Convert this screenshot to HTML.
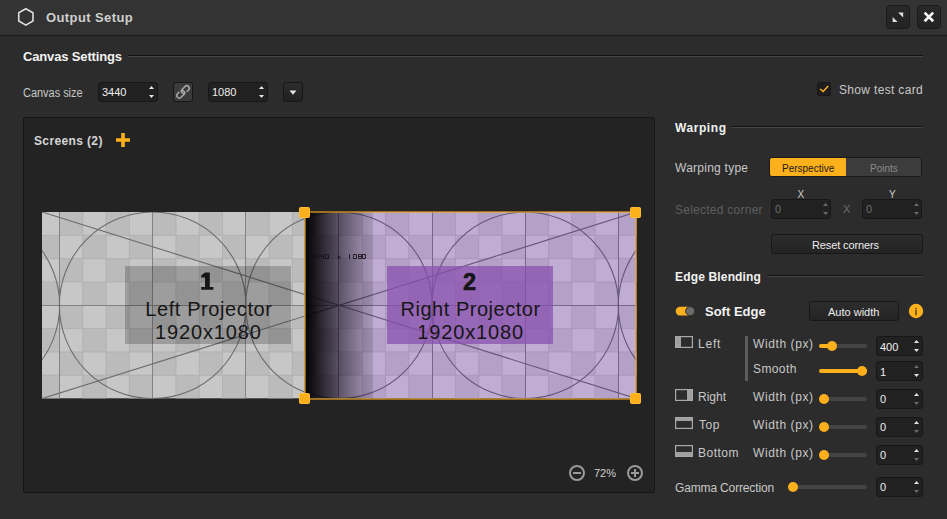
<!DOCTYPE html>
<html><head><meta charset="utf-8">
<style>
*{margin:0;padding:0;box-sizing:border-box}
html,body{width:947px;height:519px;overflow:hidden;background:#2c2c2c;font-family:"Liberation Sans",sans-serif;color:#c8c8c8}
.a{position:absolute}
.t{position:absolute;white-space:nowrap;line-height:1}
.b{font-weight:bold}
#title{left:0;top:0;width:947px;height:36px;background:#333333;border-bottom:1px solid #1c1c1c}
.wbtn{position:absolute;top:5px;width:24px;height:24px;border-radius:4px;background:linear-gradient(#292929,#232323);border:1px solid #1a1a1a}
.hline{position:absolute;height:2px;border-top:1px solid #121212;background:#474747}
.inp{position:absolute;height:20px;background:#212121;border:1px solid #171717;border-radius:3px}
.btn{position:absolute;background:#272727;border:1px solid #171717;border-radius:3px}
.lab{font-size:12px;color:#c8c8c8}
.val{font-size:11px;color:#f0f0f0}
.track{position:absolute;height:4px;border-radius:2px;background:#444}
.knob{position:absolute;width:10px;height:10px;border-radius:5px;background:#fcb01c}
.fill{position:absolute;height:4px;border-radius:2px;background:#fcb01c}
</style></head><body>
<div id="title" class="a"></div>
<svg class="a" style="left:16px;top:7px" width="20" height="21" viewBox="0 0 20 21">
<polygon points="9.85,1.7 16.95,5.8 16.95,14 9.85,18.1 2.75,14 2.75,5.8" fill="none" stroke="#dcdcdc" stroke-width="1.6"/>
</svg>
<div class="t b" style="left:46px;top:11px;font-size:13px;color:#cfcfcf;letter-spacing:0.4px">Output Setup</div>
<div class="wbtn" style="left:886px"></div>
<div class="wbtn" style="left:917px"></div>
<svg class="a" style="left:886px;top:5px" width="55" height="24" viewBox="0 0 55 24">
<polygon points="12.1,7.4 17.2,7.4 17.2,12.5" fill="#dedede"/>
<polygon points="6.6,12 6.6,17.1 11.7,17.1" fill="#dedede"/>
<path d="M38.6,7.6 L47.2,16.2 M47.2,7.6 L38.6,16.2" stroke="#f4f4f4" stroke-width="2.7" stroke-linecap="butt"/>
</svg>

<!-- Canvas settings -->
<div class="t b" style="left:23px;top:50px;font-size:13px;color:#f2f2f2;letter-spacing:-0.15px">Canvas Settings</div>
<div class="hline" style="left:128px;top:55px;width:795px"></div>
<div class="t lab" style="left:23px;top:87px;transform:scaleX(0.912);transform-origin:0 0">Canvas size</div>
<div class="inp" style="left:98px;top:82px;width:60px"></div>
<div class="t val" style="left:102px;top:87px">3440</div>
<div class="btn" style="left:173px;top:82px;width:20px;height:20px;background:#3b3b3b;border-color:#161616"></div>
<svg class="a" style="left:173px;top:82px" width="20" height="20" viewBox="0 0 20 20">
<g fill="none" stroke="#a8a8a8" stroke-width="1.5">
<rect x="3.2" y="9.7" width="8.8" height="5" rx="2.5" transform="rotate(-45 7.6 12.2)"/>
<rect x="8" y="5.1" width="8.8" height="5" rx="2.5" transform="rotate(-45 12.4 7.6)"/>
</g>
<g fill="#3b3b3b"><circle cx="6.6" cy="8.9" r="1.1"/><circle cx="13.4" cy="10.9" r="1.1"/></g>
</svg>
<div class="inp" style="left:208px;top:82px;width:60px"></div>
<div class="t val" style="left:212px;top:87px">1080</div>
<div class="btn" style="left:283px;top:82px;width:20px;height:20px;background:linear-gradient(#2c2c2c,#202020)"></div>
<svg class="a" style="left:0;top:0" width="947" height="519" viewBox="0 0 947 519">
<g fill="#e4e4e4">
<polygon points="149,89 154,89 151.5,86"/><polygon points="149,95 154,95 151.5,98"/>
<polygon points="259,89 264,89 261.5,86"/><polygon points="259,95 264,95 261.5,98"/>
<polygon points="289.5,90.5 296.5,90.5 293,94.8"/>
</g>
</svg>
<div class="a" style="left:817px;top:82px;width:14px;height:14px;background:#1e1e1e;border:1px solid #181818;border-radius:2px"></div>
<svg class="a" style="left:817px;top:82px" width="14" height="14" viewBox="0 0 14 14">
<path d="M3.1,7 L6.2,9.5 L11.2,4" fill="none" stroke="#fcb01c" stroke-width="1.45"/>
</svg>
<div class="t lab" style="left:839px;top:83.5px;letter-spacing:0.33px">Show test card</div>

<!-- canvas panel -->
<div class="a" style="left:23px;top:117px;width:632px;height:376px;background:#232323;border:1px solid #151515;border-radius:2px"></div>
<div class="t b" style="left:34px;top:135px;font-size:12px;color:#d6d6d6;letter-spacing:0.37px">Screens (2)</div>
<svg class="a" style="left:116px;top:133px" width="14" height="14" viewBox="0 0 14 14">
<path d="M7,0 V14 M0,7 H14" stroke="#fcb01c" stroke-width="3.6"/>
</svg>

<svg class="a" style="left:0;top:0" width="947" height="519" viewBox="0 0 947 519">
<defs>
<clipPath id="cl"><rect x="42" y="212" width="262.8" height="186.6"/></clipPath>
<clipPath id="cr"><rect x="304.8" y="212" width="331.6" height="186.6"/></clipPath>
<linearGradient id="blend" x1="0" x2="1" y1="0" y2="0">
<stop offset="0" stop-color="#000" stop-opacity="1"/>
<stop offset="0.25" stop-color="#000" stop-opacity="0.76"/>
<stop offset="0.5" stop-color="#000" stop-opacity="0.52"/>
<stop offset="0.84" stop-color="#000" stop-opacity="0.22"/>
<stop offset="1" stop-color="#000" stop-opacity="0.12"/>
</linearGradient>
</defs>
<g clip-path="url(#cl)">
<rect x="42.0" y="212.0" width="594.4" height="186.60000000000002" fill="#c7c7c7"/>
<rect x="12.92" y="212.00" width="23.288" height="23.325" fill="#bbbbbb"/>
<rect x="12.92" y="258.65" width="23.288" height="23.325" fill="#bbbbbb"/>
<rect x="12.92" y="305.30" width="23.288" height="23.325" fill="#bbbbbb"/>
<rect x="12.92" y="351.95" width="23.288" height="23.325" fill="#bbbbbb"/>
<rect x="36.21" y="235.32" width="23.288" height="23.325" fill="#bbbbbb"/>
<rect x="36.21" y="281.98" width="23.288" height="23.325" fill="#bbbbbb"/>
<rect x="36.21" y="328.62" width="23.288" height="23.325" fill="#bbbbbb"/>
<rect x="36.21" y="375.28" width="23.288" height="23.325" fill="#bbbbbb"/>
<rect x="59.50" y="212.00" width="23.288" height="23.325" fill="#bbbbbb"/>
<rect x="59.50" y="258.65" width="23.288" height="23.325" fill="#bbbbbb"/>
<rect x="59.50" y="305.30" width="23.288" height="23.325" fill="#bbbbbb"/>
<rect x="59.50" y="351.95" width="23.288" height="23.325" fill="#bbbbbb"/>
<rect x="82.79" y="235.32" width="23.288" height="23.325" fill="#bbbbbb"/>
<rect x="82.79" y="281.98" width="23.288" height="23.325" fill="#bbbbbb"/>
<rect x="82.79" y="328.62" width="23.288" height="23.325" fill="#bbbbbb"/>
<rect x="82.79" y="375.28" width="23.288" height="23.325" fill="#bbbbbb"/>
<rect x="106.07" y="212.00" width="23.288" height="23.325" fill="#bbbbbb"/>
<rect x="106.07" y="258.65" width="23.288" height="23.325" fill="#bbbbbb"/>
<rect x="106.07" y="305.30" width="23.288" height="23.325" fill="#bbbbbb"/>
<rect x="106.07" y="351.95" width="23.288" height="23.325" fill="#bbbbbb"/>
<rect x="129.36" y="235.32" width="23.288" height="23.325" fill="#bbbbbb"/>
<rect x="129.36" y="281.98" width="23.288" height="23.325" fill="#bbbbbb"/>
<rect x="129.36" y="328.62" width="23.288" height="23.325" fill="#bbbbbb"/>
<rect x="129.36" y="375.28" width="23.288" height="23.325" fill="#bbbbbb"/>
<rect x="152.65" y="212.00" width="23.288" height="23.325" fill="#bbbbbb"/>
<rect x="152.65" y="258.65" width="23.288" height="23.325" fill="#bbbbbb"/>
<rect x="152.65" y="305.30" width="23.288" height="23.325" fill="#bbbbbb"/>
<rect x="152.65" y="351.95" width="23.288" height="23.325" fill="#bbbbbb"/>
<rect x="175.94" y="235.32" width="23.288" height="23.325" fill="#bbbbbb"/>
<rect x="175.94" y="281.98" width="23.288" height="23.325" fill="#bbbbbb"/>
<rect x="175.94" y="328.62" width="23.288" height="23.325" fill="#bbbbbb"/>
<rect x="175.94" y="375.28" width="23.288" height="23.325" fill="#bbbbbb"/>
<rect x="199.22" y="212.00" width="23.288" height="23.325" fill="#bbbbbb"/>
<rect x="199.22" y="258.65" width="23.288" height="23.325" fill="#bbbbbb"/>
<rect x="199.22" y="305.30" width="23.288" height="23.325" fill="#bbbbbb"/>
<rect x="199.22" y="351.95" width="23.288" height="23.325" fill="#bbbbbb"/>
<rect x="222.51" y="235.32" width="23.288" height="23.325" fill="#bbbbbb"/>
<rect x="222.51" y="281.98" width="23.288" height="23.325" fill="#bbbbbb"/>
<rect x="222.51" y="328.62" width="23.288" height="23.325" fill="#bbbbbb"/>
<rect x="222.51" y="375.28" width="23.288" height="23.325" fill="#bbbbbb"/>
<rect x="245.80" y="212.00" width="23.288" height="23.325" fill="#bbbbbb"/>
<rect x="245.80" y="258.65" width="23.288" height="23.325" fill="#bbbbbb"/>
<rect x="245.80" y="305.30" width="23.288" height="23.325" fill="#bbbbbb"/>
<rect x="245.80" y="351.95" width="23.288" height="23.325" fill="#bbbbbb"/>
<rect x="269.09" y="235.32" width="23.288" height="23.325" fill="#bbbbbb"/>
<rect x="269.09" y="281.98" width="23.288" height="23.325" fill="#bbbbbb"/>
<rect x="269.09" y="328.62" width="23.288" height="23.325" fill="#bbbbbb"/>
<rect x="269.09" y="375.28" width="23.288" height="23.325" fill="#bbbbbb"/>
<rect x="292.38" y="212.00" width="23.288" height="23.325" fill="#bbbbbb"/>
<rect x="292.38" y="258.65" width="23.288" height="23.325" fill="#bbbbbb"/>
<rect x="292.38" y="305.30" width="23.288" height="23.325" fill="#bbbbbb"/>
<rect x="292.38" y="351.95" width="23.288" height="23.325" fill="#bbbbbb"/>
<rect x="315.66" y="235.32" width="23.288" height="23.325" fill="#bbbbbb"/>
<rect x="315.66" y="281.98" width="23.288" height="23.325" fill="#bbbbbb"/>
<rect x="315.66" y="328.62" width="23.288" height="23.325" fill="#bbbbbb"/>
<rect x="315.66" y="375.28" width="23.288" height="23.325" fill="#bbbbbb"/>
<rect x="338.95" y="212.00" width="23.288" height="23.325" fill="#bbbbbb"/>
<rect x="338.95" y="258.65" width="23.288" height="23.325" fill="#bbbbbb"/>
<rect x="338.95" y="305.30" width="23.288" height="23.325" fill="#bbbbbb"/>
<rect x="338.95" y="351.95" width="23.288" height="23.325" fill="#bbbbbb"/>
<rect x="362.24" y="235.32" width="23.288" height="23.325" fill="#bbbbbb"/>
<rect x="362.24" y="281.98" width="23.288" height="23.325" fill="#bbbbbb"/>
<rect x="362.24" y="328.62" width="23.288" height="23.325" fill="#bbbbbb"/>
<rect x="362.24" y="375.28" width="23.288" height="23.325" fill="#bbbbbb"/>
<rect x="385.52" y="212.00" width="23.288" height="23.325" fill="#bbbbbb"/>
<rect x="385.52" y="258.65" width="23.288" height="23.325" fill="#bbbbbb"/>
<rect x="385.52" y="305.30" width="23.288" height="23.325" fill="#bbbbbb"/>
<rect x="385.52" y="351.95" width="23.288" height="23.325" fill="#bbbbbb"/>
<rect x="408.81" y="235.32" width="23.288" height="23.325" fill="#bbbbbb"/>
<rect x="408.81" y="281.98" width="23.288" height="23.325" fill="#bbbbbb"/>
<rect x="408.81" y="328.62" width="23.288" height="23.325" fill="#bbbbbb"/>
<rect x="408.81" y="375.28" width="23.288" height="23.325" fill="#bbbbbb"/>
<rect x="432.10" y="212.00" width="23.288" height="23.325" fill="#bbbbbb"/>
<rect x="432.10" y="258.65" width="23.288" height="23.325" fill="#bbbbbb"/>
<rect x="432.10" y="305.30" width="23.288" height="23.325" fill="#bbbbbb"/>
<rect x="432.10" y="351.95" width="23.288" height="23.325" fill="#bbbbbb"/>
<rect x="455.39" y="235.32" width="23.288" height="23.325" fill="#bbbbbb"/>
<rect x="455.39" y="281.98" width="23.288" height="23.325" fill="#bbbbbb"/>
<rect x="455.39" y="328.62" width="23.288" height="23.325" fill="#bbbbbb"/>
<rect x="455.39" y="375.28" width="23.288" height="23.325" fill="#bbbbbb"/>
<rect x="478.68" y="212.00" width="23.288" height="23.325" fill="#bbbbbb"/>
<rect x="478.68" y="258.65" width="23.288" height="23.325" fill="#bbbbbb"/>
<rect x="478.68" y="305.30" width="23.288" height="23.325" fill="#bbbbbb"/>
<rect x="478.68" y="351.95" width="23.288" height="23.325" fill="#bbbbbb"/>
<rect x="501.96" y="235.32" width="23.288" height="23.325" fill="#bbbbbb"/>
<rect x="501.96" y="281.98" width="23.288" height="23.325" fill="#bbbbbb"/>
<rect x="501.96" y="328.62" width="23.288" height="23.325" fill="#bbbbbb"/>
<rect x="501.96" y="375.28" width="23.288" height="23.325" fill="#bbbbbb"/>
<rect x="525.25" y="212.00" width="23.288" height="23.325" fill="#bbbbbb"/>
<rect x="525.25" y="258.65" width="23.288" height="23.325" fill="#bbbbbb"/>
<rect x="525.25" y="305.30" width="23.288" height="23.325" fill="#bbbbbb"/>
<rect x="525.25" y="351.95" width="23.288" height="23.325" fill="#bbbbbb"/>
<rect x="548.54" y="235.32" width="23.288" height="23.325" fill="#bbbbbb"/>
<rect x="548.54" y="281.98" width="23.288" height="23.325" fill="#bbbbbb"/>
<rect x="548.54" y="328.62" width="23.288" height="23.325" fill="#bbbbbb"/>
<rect x="548.54" y="375.28" width="23.288" height="23.325" fill="#bbbbbb"/>
<rect x="571.83" y="212.00" width="23.288" height="23.325" fill="#bbbbbb"/>
<rect x="571.83" y="258.65" width="23.288" height="23.325" fill="#bbbbbb"/>
<rect x="571.83" y="305.30" width="23.288" height="23.325" fill="#bbbbbb"/>
<rect x="571.83" y="351.95" width="23.288" height="23.325" fill="#bbbbbb"/>
<rect x="595.11" y="235.32" width="23.288" height="23.325" fill="#bbbbbb"/>
<rect x="595.11" y="281.98" width="23.288" height="23.325" fill="#bbbbbb"/>
<rect x="595.11" y="328.62" width="23.288" height="23.325" fill="#bbbbbb"/>
<rect x="595.11" y="375.28" width="23.288" height="23.325" fill="#bbbbbb"/>
<rect x="618.40" y="212.00" width="23.288" height="23.325" fill="#bbbbbb"/>
<rect x="618.40" y="258.65" width="23.288" height="23.325" fill="#bbbbbb"/>
<rect x="618.40" y="305.30" width="23.288" height="23.325" fill="#bbbbbb"/>
<rect x="618.40" y="351.95" width="23.288" height="23.325" fill="#bbbbbb"/>
<rect x="641.69" y="235.32" width="23.288" height="23.325" fill="#bbbbbb"/>
<rect x="641.69" y="281.98" width="23.288" height="23.325" fill="#bbbbbb"/>
<rect x="641.69" y="328.62" width="23.288" height="23.325" fill="#bbbbbb"/>
<rect x="641.69" y="375.28" width="23.288" height="23.325" fill="#bbbbbb"/>
<line x1="82.79" y1="212.0" x2="82.79" y2="398.6" stroke="#b2b2b2" stroke-width="1"/>
<line x1="106.07" y1="212.0" x2="106.07" y2="398.6" stroke="#b2b2b2" stroke-width="1"/>
<line x1="129.36" y1="212.0" x2="129.36" y2="398.6" stroke="#b2b2b2" stroke-width="1"/>
<line x1="175.94" y1="212.0" x2="175.94" y2="398.6" stroke="#b2b2b2" stroke-width="1"/>
<line x1="199.22" y1="212.0" x2="199.22" y2="398.6" stroke="#b2b2b2" stroke-width="1"/>
<line x1="222.51" y1="212.0" x2="222.51" y2="398.6" stroke="#b2b2b2" stroke-width="1"/>
<line x1="269.09" y1="212.0" x2="269.09" y2="398.6" stroke="#b2b2b2" stroke-width="1"/>
<line x1="292.38" y1="212.0" x2="292.38" y2="398.6" stroke="#b2b2b2" stroke-width="1"/>
<line x1="315.66" y1="212.0" x2="315.66" y2="398.6" stroke="#b2b2b2" stroke-width="1"/>
<line x1="362.24" y1="212.0" x2="362.24" y2="398.6" stroke="#b2b2b2" stroke-width="1"/>
<line x1="385.52" y1="212.0" x2="385.52" y2="398.6" stroke="#b2b2b2" stroke-width="1"/>
<line x1="408.81" y1="212.0" x2="408.81" y2="398.6" stroke="#b2b2b2" stroke-width="1"/>
<line x1="455.39" y1="212.0" x2="455.39" y2="398.6" stroke="#b2b2b2" stroke-width="1"/>
<line x1="478.68" y1="212.0" x2="478.68" y2="398.6" stroke="#b2b2b2" stroke-width="1"/>
<line x1="501.96" y1="212.0" x2="501.96" y2="398.6" stroke="#b2b2b2" stroke-width="1"/>
<line x1="548.54" y1="212.0" x2="548.54" y2="398.6" stroke="#b2b2b2" stroke-width="1"/>
<line x1="571.83" y1="212.0" x2="571.83" y2="398.6" stroke="#b2b2b2" stroke-width="1"/>
<line x1="595.11" y1="212.0" x2="595.11" y2="398.6" stroke="#b2b2b2" stroke-width="1"/>
<line x1="42.0" y1="235.32" x2="636.4" y2="235.32" stroke="#b2b2b2" stroke-width="1"/>
<line x1="42.0" y1="258.65" x2="636.4" y2="258.65" stroke="#b2b2b2" stroke-width="1"/>
<line x1="42.0" y1="281.98" x2="636.4" y2="281.98" stroke="#b2b2b2" stroke-width="1"/>
<line x1="42.0" y1="328.62" x2="636.4" y2="328.62" stroke="#b2b2b2" stroke-width="1"/>
<line x1="42.0" y1="351.95" x2="636.4" y2="351.95" stroke="#b2b2b2" stroke-width="1"/>
<line x1="42.0" y1="375.28" x2="636.4" y2="375.28" stroke="#b2b2b2" stroke-width="1"/>
<line x1="59.50" y1="212.0" x2="59.50" y2="398.6" stroke="#828282" stroke-width="1"/>
<line x1="152.50" y1="212.0" x2="152.50" y2="398.6" stroke="#828282" stroke-width="1"/>
<line x1="245.50" y1="212.0" x2="245.50" y2="398.6" stroke="#828282" stroke-width="1"/>
<line x1="338.50" y1="212.0" x2="338.50" y2="398.6" stroke="#828282" stroke-width="1"/>
<line x1="432.50" y1="212.0" x2="432.50" y2="398.6" stroke="#828282" stroke-width="1"/>
<line x1="525.50" y1="212.0" x2="525.50" y2="398.6" stroke="#828282" stroke-width="1"/>
<line x1="618.50" y1="212.0" x2="618.50" y2="398.6" stroke="#828282" stroke-width="1"/>
<line x1="42.0" y1="305.5" x2="636.4" y2="305.5" stroke="#828282" stroke-width="1"/>
<circle cx="-219.95" cy="305.3" r="93.30000000000001" fill="none" stroke="#6c6c6c" stroke-width="1.1"/>
<circle cx="-33.65" cy="305.3" r="93.30000000000001" fill="none" stroke="#6c6c6c" stroke-width="1.1"/>
<circle cx="152.65" cy="305.3" r="93.30000000000001" fill="none" stroke="#6c6c6c" stroke-width="1.1"/>
<circle cx="338.95" cy="305.3" r="93.30000000000001" fill="none" stroke="#6c6c6c" stroke-width="1.1"/>
<circle cx="525.25" cy="305.3" r="93.30000000000001" fill="none" stroke="#6c6c6c" stroke-width="1.1"/>
<circle cx="711.55" cy="305.3" r="93.30000000000001" fill="none" stroke="#6c6c6c" stroke-width="1.1"/>
<circle cx="897.85" cy="305.3" r="93.30000000000001" fill="none" stroke="#6c6c6c" stroke-width="1.1"/>
<line x1="42.0" y1="212.0" x2="636.4" y2="398.6" stroke="#6c6c6c" stroke-width="1.1"/>
<line x1="42.0" y1="398.6" x2="636.4" y2="212.0" stroke="#6c6c6c" stroke-width="1.1"/>
</g>
<g clip-path="url(#cr)">
<rect x="42.0" y="212.0" width="594.4" height="186.60000000000002" fill="#c0add3"/>
<rect x="12.92" y="212.00" width="23.288" height="23.325" fill="#b4a1c7"/>
<rect x="12.92" y="258.65" width="23.288" height="23.325" fill="#b4a1c7"/>
<rect x="12.92" y="305.30" width="23.288" height="23.325" fill="#b4a1c7"/>
<rect x="12.92" y="351.95" width="23.288" height="23.325" fill="#b4a1c7"/>
<rect x="36.21" y="235.32" width="23.288" height="23.325" fill="#b4a1c7"/>
<rect x="36.21" y="281.98" width="23.288" height="23.325" fill="#b4a1c7"/>
<rect x="36.21" y="328.62" width="23.288" height="23.325" fill="#b4a1c7"/>
<rect x="36.21" y="375.28" width="23.288" height="23.325" fill="#b4a1c7"/>
<rect x="59.50" y="212.00" width="23.288" height="23.325" fill="#b4a1c7"/>
<rect x="59.50" y="258.65" width="23.288" height="23.325" fill="#b4a1c7"/>
<rect x="59.50" y="305.30" width="23.288" height="23.325" fill="#b4a1c7"/>
<rect x="59.50" y="351.95" width="23.288" height="23.325" fill="#b4a1c7"/>
<rect x="82.79" y="235.32" width="23.288" height="23.325" fill="#b4a1c7"/>
<rect x="82.79" y="281.98" width="23.288" height="23.325" fill="#b4a1c7"/>
<rect x="82.79" y="328.62" width="23.288" height="23.325" fill="#b4a1c7"/>
<rect x="82.79" y="375.28" width="23.288" height="23.325" fill="#b4a1c7"/>
<rect x="106.07" y="212.00" width="23.288" height="23.325" fill="#b4a1c7"/>
<rect x="106.07" y="258.65" width="23.288" height="23.325" fill="#b4a1c7"/>
<rect x="106.07" y="305.30" width="23.288" height="23.325" fill="#b4a1c7"/>
<rect x="106.07" y="351.95" width="23.288" height="23.325" fill="#b4a1c7"/>
<rect x="129.36" y="235.32" width="23.288" height="23.325" fill="#b4a1c7"/>
<rect x="129.36" y="281.98" width="23.288" height="23.325" fill="#b4a1c7"/>
<rect x="129.36" y="328.62" width="23.288" height="23.325" fill="#b4a1c7"/>
<rect x="129.36" y="375.28" width="23.288" height="23.325" fill="#b4a1c7"/>
<rect x="152.65" y="212.00" width="23.288" height="23.325" fill="#b4a1c7"/>
<rect x="152.65" y="258.65" width="23.288" height="23.325" fill="#b4a1c7"/>
<rect x="152.65" y="305.30" width="23.288" height="23.325" fill="#b4a1c7"/>
<rect x="152.65" y="351.95" width="23.288" height="23.325" fill="#b4a1c7"/>
<rect x="175.94" y="235.32" width="23.288" height="23.325" fill="#b4a1c7"/>
<rect x="175.94" y="281.98" width="23.288" height="23.325" fill="#b4a1c7"/>
<rect x="175.94" y="328.62" width="23.288" height="23.325" fill="#b4a1c7"/>
<rect x="175.94" y="375.28" width="23.288" height="23.325" fill="#b4a1c7"/>
<rect x="199.22" y="212.00" width="23.288" height="23.325" fill="#b4a1c7"/>
<rect x="199.22" y="258.65" width="23.288" height="23.325" fill="#b4a1c7"/>
<rect x="199.22" y="305.30" width="23.288" height="23.325" fill="#b4a1c7"/>
<rect x="199.22" y="351.95" width="23.288" height="23.325" fill="#b4a1c7"/>
<rect x="222.51" y="235.32" width="23.288" height="23.325" fill="#b4a1c7"/>
<rect x="222.51" y="281.98" width="23.288" height="23.325" fill="#b4a1c7"/>
<rect x="222.51" y="328.62" width="23.288" height="23.325" fill="#b4a1c7"/>
<rect x="222.51" y="375.28" width="23.288" height="23.325" fill="#b4a1c7"/>
<rect x="245.80" y="212.00" width="23.288" height="23.325" fill="#b4a1c7"/>
<rect x="245.80" y="258.65" width="23.288" height="23.325" fill="#b4a1c7"/>
<rect x="245.80" y="305.30" width="23.288" height="23.325" fill="#b4a1c7"/>
<rect x="245.80" y="351.95" width="23.288" height="23.325" fill="#b4a1c7"/>
<rect x="269.09" y="235.32" width="23.288" height="23.325" fill="#b4a1c7"/>
<rect x="269.09" y="281.98" width="23.288" height="23.325" fill="#b4a1c7"/>
<rect x="269.09" y="328.62" width="23.288" height="23.325" fill="#b4a1c7"/>
<rect x="269.09" y="375.28" width="23.288" height="23.325" fill="#b4a1c7"/>
<rect x="292.38" y="212.00" width="23.288" height="23.325" fill="#b4a1c7"/>
<rect x="292.38" y="258.65" width="23.288" height="23.325" fill="#b4a1c7"/>
<rect x="292.38" y="305.30" width="23.288" height="23.325" fill="#b4a1c7"/>
<rect x="292.38" y="351.95" width="23.288" height="23.325" fill="#b4a1c7"/>
<rect x="315.66" y="235.32" width="23.288" height="23.325" fill="#b4a1c7"/>
<rect x="315.66" y="281.98" width="23.288" height="23.325" fill="#b4a1c7"/>
<rect x="315.66" y="328.62" width="23.288" height="23.325" fill="#b4a1c7"/>
<rect x="315.66" y="375.28" width="23.288" height="23.325" fill="#b4a1c7"/>
<rect x="338.95" y="212.00" width="23.288" height="23.325" fill="#b4a1c7"/>
<rect x="338.95" y="258.65" width="23.288" height="23.325" fill="#b4a1c7"/>
<rect x="338.95" y="305.30" width="23.288" height="23.325" fill="#b4a1c7"/>
<rect x="338.95" y="351.95" width="23.288" height="23.325" fill="#b4a1c7"/>
<rect x="362.24" y="235.32" width="23.288" height="23.325" fill="#b4a1c7"/>
<rect x="362.24" y="281.98" width="23.288" height="23.325" fill="#b4a1c7"/>
<rect x="362.24" y="328.62" width="23.288" height="23.325" fill="#b4a1c7"/>
<rect x="362.24" y="375.28" width="23.288" height="23.325" fill="#b4a1c7"/>
<rect x="385.52" y="212.00" width="23.288" height="23.325" fill="#b4a1c7"/>
<rect x="385.52" y="258.65" width="23.288" height="23.325" fill="#b4a1c7"/>
<rect x="385.52" y="305.30" width="23.288" height="23.325" fill="#b4a1c7"/>
<rect x="385.52" y="351.95" width="23.288" height="23.325" fill="#b4a1c7"/>
<rect x="408.81" y="235.32" width="23.288" height="23.325" fill="#b4a1c7"/>
<rect x="408.81" y="281.98" width="23.288" height="23.325" fill="#b4a1c7"/>
<rect x="408.81" y="328.62" width="23.288" height="23.325" fill="#b4a1c7"/>
<rect x="408.81" y="375.28" width="23.288" height="23.325" fill="#b4a1c7"/>
<rect x="432.10" y="212.00" width="23.288" height="23.325" fill="#b4a1c7"/>
<rect x="432.10" y="258.65" width="23.288" height="23.325" fill="#b4a1c7"/>
<rect x="432.10" y="305.30" width="23.288" height="23.325" fill="#b4a1c7"/>
<rect x="432.10" y="351.95" width="23.288" height="23.325" fill="#b4a1c7"/>
<rect x="455.39" y="235.32" width="23.288" height="23.325" fill="#b4a1c7"/>
<rect x="455.39" y="281.98" width="23.288" height="23.325" fill="#b4a1c7"/>
<rect x="455.39" y="328.62" width="23.288" height="23.325" fill="#b4a1c7"/>
<rect x="455.39" y="375.28" width="23.288" height="23.325" fill="#b4a1c7"/>
<rect x="478.68" y="212.00" width="23.288" height="23.325" fill="#b4a1c7"/>
<rect x="478.68" y="258.65" width="23.288" height="23.325" fill="#b4a1c7"/>
<rect x="478.68" y="305.30" width="23.288" height="23.325" fill="#b4a1c7"/>
<rect x="478.68" y="351.95" width="23.288" height="23.325" fill="#b4a1c7"/>
<rect x="501.96" y="235.32" width="23.288" height="23.325" fill="#b4a1c7"/>
<rect x="501.96" y="281.98" width="23.288" height="23.325" fill="#b4a1c7"/>
<rect x="501.96" y="328.62" width="23.288" height="23.325" fill="#b4a1c7"/>
<rect x="501.96" y="375.28" width="23.288" height="23.325" fill="#b4a1c7"/>
<rect x="525.25" y="212.00" width="23.288" height="23.325" fill="#b4a1c7"/>
<rect x="525.25" y="258.65" width="23.288" height="23.325" fill="#b4a1c7"/>
<rect x="525.25" y="305.30" width="23.288" height="23.325" fill="#b4a1c7"/>
<rect x="525.25" y="351.95" width="23.288" height="23.325" fill="#b4a1c7"/>
<rect x="548.54" y="235.32" width="23.288" height="23.325" fill="#b4a1c7"/>
<rect x="548.54" y="281.98" width="23.288" height="23.325" fill="#b4a1c7"/>
<rect x="548.54" y="328.62" width="23.288" height="23.325" fill="#b4a1c7"/>
<rect x="548.54" y="375.28" width="23.288" height="23.325" fill="#b4a1c7"/>
<rect x="571.83" y="212.00" width="23.288" height="23.325" fill="#b4a1c7"/>
<rect x="571.83" y="258.65" width="23.288" height="23.325" fill="#b4a1c7"/>
<rect x="571.83" y="305.30" width="23.288" height="23.325" fill="#b4a1c7"/>
<rect x="571.83" y="351.95" width="23.288" height="23.325" fill="#b4a1c7"/>
<rect x="595.11" y="235.32" width="23.288" height="23.325" fill="#b4a1c7"/>
<rect x="595.11" y="281.98" width="23.288" height="23.325" fill="#b4a1c7"/>
<rect x="595.11" y="328.62" width="23.288" height="23.325" fill="#b4a1c7"/>
<rect x="595.11" y="375.28" width="23.288" height="23.325" fill="#b4a1c7"/>
<rect x="618.40" y="212.00" width="23.288" height="23.325" fill="#b4a1c7"/>
<rect x="618.40" y="258.65" width="23.288" height="23.325" fill="#b4a1c7"/>
<rect x="618.40" y="305.30" width="23.288" height="23.325" fill="#b4a1c7"/>
<rect x="618.40" y="351.95" width="23.288" height="23.325" fill="#b4a1c7"/>
<rect x="641.69" y="235.32" width="23.288" height="23.325" fill="#b4a1c7"/>
<rect x="641.69" y="281.98" width="23.288" height="23.325" fill="#b4a1c7"/>
<rect x="641.69" y="328.62" width="23.288" height="23.325" fill="#b4a1c7"/>
<rect x="641.69" y="375.28" width="23.288" height="23.325" fill="#b4a1c7"/>
<line x1="82.79" y1="212.0" x2="82.79" y2="398.6" stroke="#ac98bd" stroke-width="1"/>
<line x1="106.07" y1="212.0" x2="106.07" y2="398.6" stroke="#ac98bd" stroke-width="1"/>
<line x1="129.36" y1="212.0" x2="129.36" y2="398.6" stroke="#ac98bd" stroke-width="1"/>
<line x1="175.94" y1="212.0" x2="175.94" y2="398.6" stroke="#ac98bd" stroke-width="1"/>
<line x1="199.22" y1="212.0" x2="199.22" y2="398.6" stroke="#ac98bd" stroke-width="1"/>
<line x1="222.51" y1="212.0" x2="222.51" y2="398.6" stroke="#ac98bd" stroke-width="1"/>
<line x1="269.09" y1="212.0" x2="269.09" y2="398.6" stroke="#ac98bd" stroke-width="1"/>
<line x1="292.38" y1="212.0" x2="292.38" y2="398.6" stroke="#ac98bd" stroke-width="1"/>
<line x1="315.66" y1="212.0" x2="315.66" y2="398.6" stroke="#ac98bd" stroke-width="1"/>
<line x1="362.24" y1="212.0" x2="362.24" y2="398.6" stroke="#ac98bd" stroke-width="1"/>
<line x1="385.52" y1="212.0" x2="385.52" y2="398.6" stroke="#ac98bd" stroke-width="1"/>
<line x1="408.81" y1="212.0" x2="408.81" y2="398.6" stroke="#ac98bd" stroke-width="1"/>
<line x1="455.39" y1="212.0" x2="455.39" y2="398.6" stroke="#ac98bd" stroke-width="1"/>
<line x1="478.68" y1="212.0" x2="478.68" y2="398.6" stroke="#ac98bd" stroke-width="1"/>
<line x1="501.96" y1="212.0" x2="501.96" y2="398.6" stroke="#ac98bd" stroke-width="1"/>
<line x1="548.54" y1="212.0" x2="548.54" y2="398.6" stroke="#ac98bd" stroke-width="1"/>
<line x1="571.83" y1="212.0" x2="571.83" y2="398.6" stroke="#ac98bd" stroke-width="1"/>
<line x1="595.11" y1="212.0" x2="595.11" y2="398.6" stroke="#ac98bd" stroke-width="1"/>
<line x1="42.0" y1="235.32" x2="636.4" y2="235.32" stroke="#ac98bd" stroke-width="1"/>
<line x1="42.0" y1="258.65" x2="636.4" y2="258.65" stroke="#ac98bd" stroke-width="1"/>
<line x1="42.0" y1="281.98" x2="636.4" y2="281.98" stroke="#ac98bd" stroke-width="1"/>
<line x1="42.0" y1="328.62" x2="636.4" y2="328.62" stroke="#ac98bd" stroke-width="1"/>
<line x1="42.0" y1="351.95" x2="636.4" y2="351.95" stroke="#ac98bd" stroke-width="1"/>
<line x1="42.0" y1="375.28" x2="636.4" y2="375.28" stroke="#ac98bd" stroke-width="1"/>
<line x1="59.50" y1="212.0" x2="59.50" y2="398.6" stroke="#76668a" stroke-width="1"/>
<line x1="152.50" y1="212.0" x2="152.50" y2="398.6" stroke="#76668a" stroke-width="1"/>
<line x1="245.50" y1="212.0" x2="245.50" y2="398.6" stroke="#76668a" stroke-width="1"/>
<line x1="338.50" y1="212.0" x2="338.50" y2="398.6" stroke="#76668a" stroke-width="1"/>
<line x1="432.50" y1="212.0" x2="432.50" y2="398.6" stroke="#76668a" stroke-width="1"/>
<line x1="525.50" y1="212.0" x2="525.50" y2="398.6" stroke="#76668a" stroke-width="1"/>
<line x1="618.50" y1="212.0" x2="618.50" y2="398.6" stroke="#76668a" stroke-width="1"/>
<line x1="42.0" y1="305.5" x2="636.4" y2="305.5" stroke="#76668a" stroke-width="1"/>
<circle cx="-219.95" cy="305.3" r="93.30000000000001" fill="none" stroke="#65557a" stroke-width="1.1"/>
<circle cx="-33.65" cy="305.3" r="93.30000000000001" fill="none" stroke="#65557a" stroke-width="1.1"/>
<circle cx="152.65" cy="305.3" r="93.30000000000001" fill="none" stroke="#65557a" stroke-width="1.1"/>
<circle cx="338.95" cy="305.3" r="93.30000000000001" fill="none" stroke="#65557a" stroke-width="1.1"/>
<circle cx="525.25" cy="305.3" r="93.30000000000001" fill="none" stroke="#65557a" stroke-width="1.1"/>
<circle cx="711.55" cy="305.3" r="93.30000000000001" fill="none" stroke="#65557a" stroke-width="1.1"/>
<circle cx="897.85" cy="305.3" r="93.30000000000001" fill="none" stroke="#65557a" stroke-width="1.1"/>
<line x1="42.0" y1="212.0" x2="636.4" y2="398.6" stroke="#65557a" stroke-width="1.1"/>
<line x1="42.0" y1="398.6" x2="636.4" y2="212.0" stroke="#65557a" stroke-width="1.1"/>
</g>
<rect x="304.8" y="212" width="68.3" height="186.6" fill="url(#blend)"/>
<g fill="none" stroke="#141018" stroke-width="1" opacity="0.85"><path transform="translate(311 254)" d="M0,0.5 H3.5 V4.5 H0 M1,2.5 H3.5"/><path transform="translate(315 254)" d="M0.5,0 V2.5 H3.5 M3.5,0 V5"/><path transform="translate(320 254)" d="M0.5,0 V2.5 H3.5 M3.5,0 V5"/><path transform="translate(325 254)" d="M0.5,0.5 H3.5 V4.5 H0.5 Z"/><path transform="translate(348 254)" d="M1.5,0 V5"/><path transform="translate(353 254)" d="M0.5,0.5 H3.5 V4.5 H0.5 Z"/><path transform="translate(358 254)" d="M0.5,0.5 H3.5 V4.5 H0.5 Z M0.5,2.5 H3.5"/><path transform="translate(362 254)" d="M0.5,0.5 H3.5 V4.5 H0.5 Z"/><path transform="translate(337.5 255.8)" d="M0,0 L3,3 M3,0 L0,3"/></g>
<rect x="125" y="266" width="166" height="78" fill="#000" fill-opacity="0.21"/>
<rect x="387" y="266" width="166" height="78" fill="#884ead" fill-opacity="0.72"/>
<g font-family="Liberation Sans" fill="#161616" text-anchor="middle">
<path d="M205,272.5 H209.8 V287 H213.4 V289.8 H201.2 V287 H205 V277.6 H201.2 V275.4 Z"/>
<text x="208.9" y="315.6" font-size="20" letter-spacing="0.6">Left Projector</text>
<text x="208.4" y="339.3" font-size="20" letter-spacing="0.85">1920x1080</text>
<text x="469.6" y="289.6" font-size="23.5" font-weight="bold" stroke="#161616" stroke-width="0.7">2</text>
<text x="470.6" y="315.6" font-size="20" letter-spacing="0.53">Right Projector</text>
<text x="470.6" y="339.3" font-size="20" letter-spacing="0.85">1920x1080</text>
</g>
<rect x="305" y="212" width="331" height="187" fill="none" stroke="#f0a820" stroke-width="1.15"/>
<g fill="#fcb01c" stroke="#ffbb33" stroke-width="1">
<rect x="299.5" y="207.5" width="10" height="10" rx="1"/>
<rect x="630.5" y="207.5" width="10" height="10" rx="1"/>
<rect x="299.5" y="393.5" width="10" height="10" rx="1"/>
<rect x="630.5" y="393.5" width="10" height="10" rx="1"/>
</g>
<!-- zoom -->
<g fill="none" stroke="#9a9a9a" stroke-width="2">
<circle cx="577" cy="473" r="7"/>
<path d="M573,473 H581"/>
<circle cx="635" cy="473" r="7"/>
<path d="M631,473 H639 M635,469 V477"/>
</g>
</svg>
<div class="t" style="left:594px;top:468px;font-size:11px;color:#cfcfcf">72%</div>

<!-- right panel -->
<div class="t b" style="left:675px;top:122px;font-size:12px;color:#f2f2f2;letter-spacing:0.58px">Warping</div>
<div class="hline" style="left:732px;top:126px;width:191px"></div>
<div class="t lab" style="left:675px;top:162px;letter-spacing:0.25px">Warping type</div>
<div class="a" style="left:769px;top:157px;width:153px;height:20px;background:#3c3c3c;border:1px solid #1a1a1a;border-radius:3px;overflow:hidden">
<div class="a" style="left:0;top:0;width:76px;height:18px;background:#fcb01c"></div>
</div>
<div class="t" style="left:782px;top:163.6px;font-size:10px;color:#1a1a1a">Perspective</div>
<div class="t" style="left:870px;top:163.6px;font-size:10px;color:#8a8a8a">Points</div>
<div class="t" style="left:797.6px;top:189.6px;font-size:10px;color:#cccccc">X</div>
<div class="t" style="left:889px;top:189.6px;font-size:10px;color:#cccccc">Y</div>
<div class="t lab" style="left:675px;top:204px;color:#5e5e5e;letter-spacing:0.25px">Selected corner</div>
<div class="inp" style="left:771px;top:199px;width:60px"></div>
<div class="t val" style="left:775px;top:204px;color:#6c6c6c">0</div>
<div class="t" style="left:843px;top:204px;font-size:11px;color:#6c6c6c">X</div>
<div class="inp" style="left:862px;top:199px;width:60px"></div>
<div class="t val" style="left:866px;top:204px;color:#6c6c6c">0</div>
<div class="btn" style="left:771px;top:234px;width:152px;height:20px;background:linear-gradient(#2d2d2d,#232323)"></div>
<div class="t" style="left:812px;top:239.5px;font-size:11px;color:#ececec;letter-spacing:-0.12px">Reset corners</div>

<div class="t b" style="left:675px;top:270.5px;font-size:12px;color:#f2f2f2;letter-spacing:0.16px">Edge Blending</div>
<div class="hline" style="left:768px;top:275px;width:155px"></div>
<svg class="a" style="left:675px;top:305px" width="21" height="12" viewBox="0 0 21 12">
<rect x="0.7" y="1.8" width="19" height="8.6" rx="4.3" fill="#fcb01c"/>
<circle cx="15.1" cy="6.1" r="4.5" fill="#6c6c6c" stroke="#262626" stroke-width="0.9"/>
</svg>
<div class="t b" style="left:705px;top:305px;font-size:13px;color:#f2f2f2">Soft Edge</div>
<div class="btn" style="left:809px;top:301px;width:90px;height:20px;background:linear-gradient(#2d2d2d,#232323)"></div>
<div class="t" style="left:828px;top:306.5px;font-size:11px;color:#ececec">Auto width</div>
<svg class="a" style="left:908px;top:303px" width="16" height="16" viewBox="0 0 16 16">
<circle cx="8" cy="8" r="7.2" fill="#fcb01c"/>
<rect x="7.4" y="4.9" width="1.2" height="1.4" fill="#2e2a14"/>
<rect x="7.4" y="7" width="1.2" height="5.3" fill="#2e2a14"/>
</svg>

<svg class="a" style="left:0;top:0" width="947" height="519" viewBox="0 0 947 519">
<g fill="none" stroke="#a8a8a8" stroke-width="1.2">
<rect x="675.6" y="336.6" width="16.8" height="10.8"/>
<rect x="675.6" y="389.6" width="16.8" height="10.8"/>
<rect x="675.6" y="417.6" width="16.8" height="10.8"/>
<rect x="675.6" y="445.6" width="16.8" height="10.8"/>
</g>
<g fill="#a0a0a0">
<rect x="676" y="337" width="5" height="10"/>
<rect x="687" y="390" width="5" height="10"/>
<rect x="676" y="418" width="16" height="3"/>
<rect x="676" y="452" width="16" height="4"/>
</g>
<rect x="745" y="336" width="3" height="45" fill="#5c5c5c"/>
</svg>
<div class="t lab" style="left:698px;top:338px;letter-spacing:0.8px">Left</div>
<div class="t lab" style="left:753px;top:338px"><span style="letter-spacing:0.6px">Width (px)</span></div>
<div class="t lab" style="left:753px;top:363px"><span style="letter-spacing:0.4px">Smooth</span></div>
<div class="t lab" style="left:698px;top:391px">Right</div>
<div class="t lab" style="left:753px;top:391px"><span style="letter-spacing:0.6px">Width (px)</span></div>
<div class="t lab" style="left:699px;top:419px;letter-spacing:0.5px">Top</div>
<div class="t lab" style="left:753px;top:419px"><span style="letter-spacing:0.6px">Width (px)</span></div>
<div class="t lab" style="left:698px;top:447px;letter-spacing:0.5px">Bottom</div>
<div class="t lab" style="left:753px;top:447px"><span style="letter-spacing:0.6px">Width (px)</span></div>
<div class="t lab" style="left:675px;top:482px"><span style="letter-spacing:-0.15px">Gamma Correction</span></div>

<!-- sliders -->
<div class="track" style="left:819px;top:344px;width:48px"></div>
<div class="fill" style="left:819px;top:344px;width:13px"></div>
<div class="knob" style="left:827px;top:341px"></div>
<div class="fill" style="left:819px;top:369px;width:48px"></div>
<div class="knob" style="left:857px;top:366px"></div>
<div class="track" style="left:819px;top:397px;width:48px"></div>
<div class="knob" style="left:819px;top:394px"></div>
<div class="track" style="left:819px;top:425px;width:48px"></div>
<div class="knob" style="left:819px;top:422px"></div>
<div class="track" style="left:819px;top:453px;width:48px"></div>
<div class="knob" style="left:819px;top:450px"></div>
<div class="track" style="left:788px;top:485px;width:79px"></div>
<div class="knob" style="left:788px;top:482px"></div>

<!-- spin inputs -->
<div class="inp" style="left:876px;top:336px;width:47px"></div>
<div class="t val" style="left:880px;top:342px">400</div>
<div class="inp" style="left:876px;top:361px;width:47px"></div>
<div class="t val" style="left:880px;top:367px">1</div>
<div class="inp" style="left:876px;top:389px;width:47px"></div>
<div class="t val" style="left:880px;top:394px">0</div>
<div class="inp" style="left:876px;top:417px;width:47px"></div>
<div class="t val" style="left:880px;top:422px">0</div>
<div class="inp" style="left:876px;top:445px;width:47px"></div>
<div class="t val" style="left:880px;top:450px">0</div>
<div class="inp" style="left:876px;top:477px;width:47px"></div>
<div class="t val" style="left:880px;top:482px">0</div>
<svg class="a" style="left:0;top:0" width="947" height="519" viewBox="0 0 947 519">
<g fill="#e4e4e4">
<polygon points="914,343 919,343 916.5,340"/><polygon points="914,349 919,349 916.5,352"/>
<polygon points="914,374 919,374 916.5,377"/>
<polygon points="914,396 919,396 916.5,393"/>
<polygon points="914,424 919,424 916.5,421"/>
<polygon points="914,452 919,452 916.5,449"/>
<polygon points="914,484 919,484 916.5,481"/>
</g>
<g fill="#6a6a6a">
<polygon points="914,368 919,368 916.5,365"/>
<polygon points="914,402 919,402 916.5,405"/>
<polygon points="914,430 919,430 916.5,433"/>
<polygon points="914,458 919,458 916.5,461"/>
<polygon points="914,490 919,490 916.5,493"/>
<polygon points="823,206 828,206 825.5,203"/><polygon points="823,212 828,212 825.5,215"/>
<polygon points="914,206 919,206 916.5,203"/><polygon points="914,212 919,212 916.5,215"/>
</g>
</svg>
</body></html>
